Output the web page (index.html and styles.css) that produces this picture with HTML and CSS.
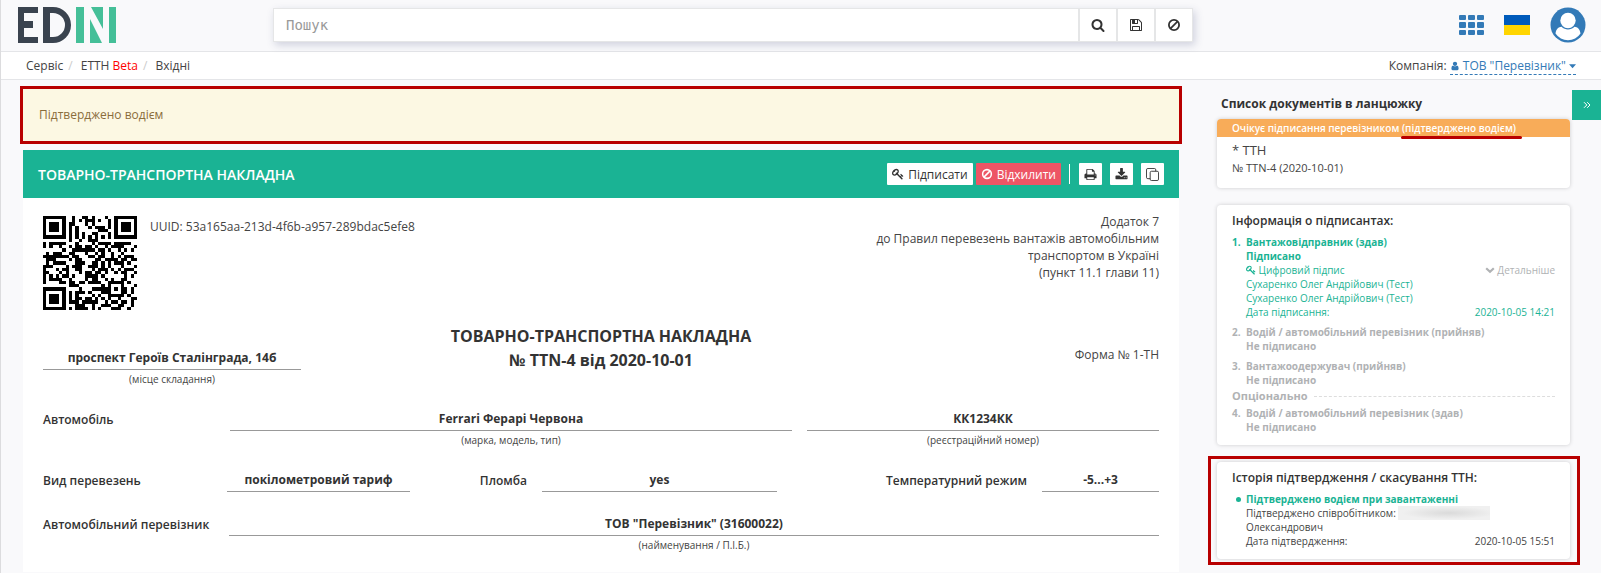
FILE: index.html
```html
<!DOCTYPE html>
<html lang="uk">
<head>
<meta charset="utf-8">
<title>EDIN — Товарно-транспортна накладна</title>
<link rel="stylesheet" href="styles.css">
</head>
<body>
<svg class="sprite" aria-hidden="true">
  <symbol id="i-search" viewBox="0 0 1792 1792"><path d="M1216 832q0-185-131.5-316.5t-316.5-131.5-316.5 131.5-131.5 316.5 131.5 316.5 316.5 131.5 316.5-131.5 131.5-316.5zm512 832q0 52-38 90t-90 38q-54 0-90-38l-343-342q-179 124-399 124-143 0-273.5-55.5t-225-150-150-225-55.5-273.5 55.5-273.5 150-225 225-150 273.5-55.5 273.5 55.5 225 150 150 225 55.5 273.5q0 220-124 399l343 343q37 37 37 90z"/></symbol>
  <symbol id="i-save" viewBox="0 0 1792 1792"><path d="M512 1536h768v-384h-768v384zm896 0h128v-896q0-14-10-38.5t-20-34.5l-281-281q-10-10-34-20t-39-10v416q0 40-28 68t-68 28h-576q-40 0-68-28t-28-68v-416h-128v1280h128v-416q0-40 28-68t68-28h832q40 0 68 28t28 68v416zm-384-928v-320q0-13-9.5-22.5t-22.5-9.5h-192q-13 0-22.5 9.5t-9.5 22.5v320q0 13 9.5 22.5t22.5 9.5h192q13 0 22.5-9.5t9.5-22.5zm640 32v928q0 40-28 68t-68 28h-1344q-40 0-68-28t-28-68v-1344q0-40 28-68t68-28h928q40 0 88 20t76 48l280 280q28 28 48 76t20 88z"/></symbol>
  <symbol id="i-ban" viewBox="0 0 14 14"><g fill="none" stroke="currentColor" stroke-width="1.8"><circle cx="7" cy="7" r="5.1"/><path d="M3.4 10.6l7.2-7.2"/></g></symbol>
  <symbol id="i-user" viewBox="0 0 1792 1792"><path d="M1536 1399q0 109-62.5 187t-150.5 78h-854q-88 0-150.5-78t-62.5-187q0-85 8.5-160.5t31.5-152 58.5-131 94-89 134.5-34.5q131 128 313 128t313-128q76 0 134.5 34.5t94 89 58.5 131 31.5 152 8.5 160.5zm-256-887q0 159-112.5 271.5t-271.5 112.5-271.5-112.5-112.5-271.5 112.5-271.5 271.5-112.5 271.5 112.5 112.5 271.5z"/></symbol>
  <symbol id="i-key" viewBox="0 0 1792 1792"><path d="M832 512q0-80-56-136t-136-56-136 56-56 136q0 42 19 83-41-19-83-19-80 0-136 56t-56 136 56 136 136 56 136-56 56-136q0-42-19-83 41 19 83 19 80 0 136-56t56-136zm851 704q0 17-49 66t-66 49q-9 0-28.5-16t-36.5-33-38.5-40-24.5-26l-96 96 220 220q28 28 28 68 0 42-39 81t-81 39q-40 0-68-28l-671-671q-176 131-365 131-163 0-265.5-102.5t-102.5-265.5q0-160 95-313t248-248 313-95q163 0 265.5 102.5t102.5 265.5q0 189-131 365l355 355 96-96q-3-3-26-24.5t-40-38.5-33-36.5-16-28.5q0-17 49-66t66-49q13 0 23 10 6 6 46 44.5t82 79.5 86.5 86 73 78 28.5 41z"/></symbol>
  <symbol id="i-print" viewBox="0 0 1792 1792"><path d="M448 1536h896v-256h-896v256zm0-640h896v-384h-160q-40 0-68-28t-28-68v-160h-640v640zm1152 64q0-26-19-45t-45-19-45 19-19 45 19 45 45 19 45-19 19-45zm128 0v416q0 13-9.5 22.5t-22.5 9.5h-224v160q0 40-28 68t-68 28h-960q-40 0-68-28t-28-68v-160h-224q-13 0-22.5-9.5t-9.5-22.5v-416q0-79 56.5-135.5t135.5-56.5h64v-544q0-40 28-68t68-28h672q40 0 88 20t76 48l152 152q28 28 48 76t20 88v256h64q79 0 135.5 56.5t56.5 135.5z"/></symbol>
  <symbol id="i-download" viewBox="0 0 1792 1792"><path d="M1344 1344q0-26-19-45t-45-19-45 19-19 45 19 45 45 19 45-19 19-45zm256 0q0-26-19-45t-45-19-45 19-19 45 19 45 45 19 45-19 19-45zm128-224v320q0 40-28 68t-68 28h-1472q-40 0-68-28t-28-68v-320q0-40 28-68t68-28h465l135 136q58 56 136 56t136-56l136-136h464q40 0 68 28t28 68zm-325-569q17 41-14 70l-448 448q-18 19-45 19t-45-19l-448-448q-31-29-14-70 17-39 59-39h256v-448q0-26 19-45t45-19h256q26 0 45 19t19 45v448h256q42 0 59 39z"/></symbol>
  <symbol id="i-copy" viewBox="0 0 14 14"><g fill="none" stroke="currentColor"><rect x="4.5" y="3.5" width="9" height="10" rx="1.5"/><path d="M10.5 3.5V2A1.5 1.5 0 0 0 9 .5H2A1.5 1.5 0 0 0 .5 2v8A1.5 1.5 0 0 0 2 11.500h2.500"/></g></symbol>
  <symbol id="i-down" viewBox="0 0 10 10"><path d="M1.200 3.200L5 6.800l3.800-3.600" fill="none" stroke="currentColor" stroke-width="2.200"/></symbol>
  <symbol id="i-caret" viewBox="0 0 8 8"><path d="M0 2h8L4 6.500z"/></symbol>
  <symbol id="i-angles" viewBox="0 0 8 8"><path d="M1 1.200L3.800 4 1 6.800M4.200 1.200L7 4 4.200 6.800" fill="none" stroke="currentColor"/></symbol>
</svg>

<header class="topbar">
  <a class="logo" href="#" aria-label="EDIN">
    <svg viewBox="0 0 98 36" width="98" height="36">
      <path fill="#3a434f" d="M0 0h20v6H6v8h9v7H6v9h14v6H0zM25 0h10a18 18 0 0 1 0 36H25zM32 6v24h3a12 12 0 0 0 0-24z"/>
      <path fill="#45bf98" d="M58 0h8v36h-8zM91 0h7v36h-7zM73 0h12v22zM72 12l12 24H72z"/>
    </svg>
  </a>
  <form class="search">
    <input class="search-input" type="text" placeholder="Пошук" aria-label="Пошук">
    <button class="search-btn" type="button" aria-label="Знайти"><svg class="icon"><use href="#i-search"/></svg></button>
    <button class="search-btn" type="button" aria-label="Зберегти"><svg class="icon"><use href="#i-save"/></svg></button>
    <button class="search-btn" type="button" aria-label="Очистити"><svg class="icon"><use href="#i-ban"/></svg></button>
  </form>
  <nav class="tools">
    <button class="tool" type="button" aria-label="Сервіси">
      <svg viewBox="0 0 25 21" width="25" height="21">
        <rect y="1" width="7" height="5" rx="1"/><rect x="9" y="1" width="7" height="5" rx="1"/><rect x="18" y="1" width="7" height="5" rx="1"/>
        <rect y="8" width="7" height="6" rx="1"/><rect x="9" y="8" width="7" height="6" rx="1"/><rect x="18" y="8" width="7" height="6" rx="1"/>
        <rect y="16" width="7" height="5" rx="1"/><rect x="9" y="16" width="7" height="5" rx="1"/><rect x="18" y="16" width="7" height="5" rx="1"/>
      </svg>
    </button>
    <button class="tool" type="button" aria-label="Українська"><svg viewBox="0 0 26 20" width="26" height="20"><path fill="#005bbb" d="M0 0h26v10H0z"/><path fill="#ffd500" d="M0 10h26v10H0z"/></svg></button>
    <button class="tool" type="button" aria-label="Профіль">
      <svg viewBox="0 0 36 36" width="36" height="36">
        <circle cx="18" cy="18" r="17.500"/>
        <path fill="#fff" d="M5.500 26.500c.6-4.500 3-6.500 6-6.700 3.700 3.700 9.300 3.700 13 0 3 .2 5.400 2.200 6 6.700a15 15 0 0 1-25 0z"/>
        <circle cx="18" cy="13.500" r="7.700" fill="#fff"/>
      </svg>
    </button>
  </nav>
</header>

<div class="crumbs">
  <nav class="crumb-list">
    <a href="#">Сервіс</a><span class="slash">/</span><a href="#">ЕТТН <span class="beta">Beta</span></a><span class="slash">/</span><a href="#">Вхідні</a>
  </nav>
  <div class="company">Компанія: <a class="company-link" href="#"><svg class="icon-sm"><use href="#i-user"/></svg> ТОВ "Перевізник" <svg class="icon-caret"><use href="#i-caret"/></svg></a></div>
</div>

<div class="layout">
  <main class="main">
    <div class="alert">Підтверджено водієм</div>
    <section class="doc">
      <div class="doc-head">
        <h1 class="doc-title">ТОВАРНО-ТРАНСПОРТНА НАКЛАДНА</h1>
        <div class="actions">
          <button class="btn" type="button"><svg class="icon-btn"><use href="#i-key"/></svg> Підписати</button>
          <button class="btn btn-danger" type="button"><svg class="icon-btn"><use href="#i-ban"/></svg> Відхилити</button>
          <span class="divider"></span>
          <button class="btn btn-icon" type="button" aria-label="Друк"><svg class="icon-md"><use href="#i-print"/></svg></button>
          <button class="btn btn-icon" type="button" aria-label="Завантажити"><svg class="icon-md"><use href="#i-download"/></svg></button>
          <button class="btn btn-icon" type="button" aria-label="Копіювати"><svg class="icon-md"><use href="#i-copy"/></svg></button>
        </div>
      </div>
      <div class="doc-body">
        <div class="doc-top">
          <svg class="qr" id="qr" viewBox="0 0 29 29" data-text="53a165aa-213d-4f6b-a957-289bdac5efe8" role="img" aria-label="QR-код"></svg>
          <div class="uuid">UUID: 53a165aa-213d-4f6b-a957-289bdac5efe8</div>
          <div class="annex">Додаток 7<br>до Правил перевезень вантажів автомобільним<br>транспортом в Україні<br>(пункт 11.1 глави 11)</div>
        </div>
        <div class="row row-title">
          <div class="place">
            <div class="value">проспект Героїв Сталінграда, 14б</div>
            <div class="hint">(місце складання)</div>
          </div>
          <h2 class="title">ТОВАРНО-ТРАНСПОРТНА НАКЛАДНА<br>№ TTN-4 від 2020-10-01</h2>
          <div class="form-no">Форма № 1-ТН</div>
        </div>
        <div class="row row-car">
          <div class="label">Автомобіль</div>
          <div><div class="value">Ferrari Ферарі Червона</div><div class="hint">(марка, модель, тип)</div></div>
          <div><div class="value">КК1234КК</div><div class="hint">(реєстраційний номер)</div></div>
        </div>
        <div class="row row-kind">
          <div class="label">Вид перевезень</div>
          <div class="value">покілометровий тариф</div>
          <div class="label label-end">Пломба</div>
          <div class="value">yes</div>
          <div class="label label-end">Температурний режим</div>
          <div class="value">-5...+3</div>
        </div>
        <div class="row row-carrier">
          <div class="label">Автомобільний перевізник</div>
          <div><div class="value">ТОВ "Перевізник" (31600022)</div><div class="hint">(найменування / П.І.Б.)</div></div>
        </div>
      </div>
    </section>
  </main>

  <aside class="side">
    <button class="collapse" type="button" aria-label="Згорнути"><svg class="icon-xs"><use href="#i-angles"/></svg></button>
    <h2 class="side-title">Список документів в ланцюжку</h2>
    <section class="card card-doc">
      <div class="status">Очікує підписання перевізником <span class="marked">(підтверджено водієм)</span></div>
      <div class="card-doc-body">
        <div class="doc-type">* ТТН</div>
        <div class="doc-num">№ TTN-4 (2020-10-01)</div>
      </div>
    </section>
    <section class="card card-pad">
      <h3 class="card-title">Інформація о підписантах:</h3>
      <div class="signer signed">
        <span class="num">1.</span>
        <div>
          <strong>Вантажовідправник (здав)<br>Підписано</strong>
          <div class="pair"><span><svg class="icon-key"><use href="#i-key"/></svg> Цифровий підпис</span><a class="more" href="#"><svg class="icon-key"><use href="#i-down"/></svg> Детальніше</a></div>
          <div>Сухаренко Олег Андрійович (Тест)</div>
          <div>Сухаренко Олег Андрійович (Тест)</div>
          <div class="pair"><span>Дата підписання:</span><span>2020-10-05 14:21</span></div>
        </div>
      </div>
      <div class="signer"><span class="num">2.</span><strong>Водій / автомобільний перевізник (прийняв)<br>Не підписано</strong></div>
      <div class="signer"><span class="num">3.</span><strong>Вантажоодержувач (прийняв)<br>Не підписано</strong></div>
      <div class="optional">Опціонально</div>
      <div class="signer"><span class="num">4.</span><strong>Водій / автомобільний перевізник (здав)<br>Не підписано</strong></div>
    </section>
    <section class="card card-pad card-history">
      <h3 class="card-title">Історія підтвердження / скасування ТТН:</h3>
      <div class="event">
        <strong class="event-name">Підтверджено водієм при завантаженні</strong>
        <div>Підтверджено співробітником: <span class="redacted"></span><br>Олександрович</div>
        <div class="pair"><span>Дата підтвердження:</span><span>2020-10-05 15:51</span></div>
      </div>
    </section>
  </aside>
</div>
<script src="qr.js"></script>
</body>
</html>
```
FILE: styles.css
```css
* { box-sizing: border-box; }
body {
  margin: 0;
  min-height: 100vh;
  background: #f9f9fb;
  border-left: 1px solid #dcdcde;
  color: #444;
  font: 12px/17px "Open Sans", "Noto Sans", sans-serif;
  overflow: hidden;
}
h1, h2, h3 { margin: 0; font-size: 12px; font-weight: 600; color: #333; }
a { color: inherit; text-decoration: none; }
button { font: inherit; color: inherit; cursor: pointer; }
svg { fill: currentColor; }
.sprite { display: none; }
.icon, .icon-sm, .icon-md, .icon-btn, .icon-key, .icon-caret, .icon-xs { flex: none; }
.icon { width: 14px; height: 14px; }
.icon-md { width: 13px; height: 13px; }
.icon-btn { width: 12px; height: 12px; }
.icon-sm { width: 10px; height: 12px; vertical-align: -2px; transform-origin: center; }
.icon-key { width: 10px; height: 10px; vertical-align: -1px; }
.icon-caret { width: 7px; height: 8px; }
.icon-xs { width: 8px; height: 8px; }

.topbar {
  display: flex;
  align-items: center;
  height: 52px;
  padding: 0 15px 2px 17px;
  border-bottom: 1px solid #e4e5e8;
}
.logo { display: flex; margin-right: 157px; }
.search {
  display: flex;
  flex: 0 1 920px;
  height: 34px;
  border: 1px solid #e5e6e7;
  background: #fff;
  box-shadow: 2px 3px 8px rgba(60, 70, 120, .22);
}
.search-input {
  flex: 1;
  min-width: 0;
  padding: 0 12px;
  border: 0;
  background: none;
  font: 14px "DejaVu Sans Mono", monospace;
}
.search-input::placeholder { color: #999; }
.search-btn {
  display: flex;
  align-items: center;
  justify-content: center;
  width: 38px;
  border: 0;
  border-left: 2px solid #e5e6e7;
  background: none;
  color: #333;
}
.tools { display: flex; align-items: center; gap: 20px; margin-left: auto; color: #337ab7; }
.tool { display: flex; padding: 0; border: 0; background: none; }

.crumbs {
  display: flex;
  justify-content: space-between;
  height: 28px;
  padding: 5px 25px 0;
  background: #fff;
  border-bottom: 1px solid #e4e5e8;
}
.slash { margin: 0 8px 0 5px; color: #ccc; }
.beta { color: #f00; }
.company-link { display: inline-block; color: #337ab7; border-bottom: 1px dashed #337ab7; }

.layout {
  display: grid;
  grid-template-columns: minmax(0, 1156fr) minmax(0, 353fr);
  gap: 38px;
  padding: 9px 31px 0 22px;
}
.alert {
  margin-bottom: 9px;
  padding: 17px 16px 18px;
  background: #fcf8e3;
  color: #8a6d3b;
  outline: 3px solid #b80000;
}
.doc { background: #fff; }
.doc-head {
  display: flex;
  align-items: center;
  justify-content: space-between;
  height: 48px;
  padding: 0 15px;
  background: #1ab394;
}
.doc-title { font-size: 14px; font-weight: 600; color: #fff; }
.actions { display: flex; align-items: center; }
.btn {
  display: flex;
  align-items: center;
  gap: 4px;
  height: 22px;
  margin-left: 3px;
  padding: 0 5px;
  border: 0;
  border-radius: 1px;
  background: #fff;
  color: #333;
}
.btn-danger { background: #ed5565; color: #fff; }
.btn-icon { width: 23px; margin-left: 8px; }
.divider { width: 1px; height: 20px; margin: 0 1px 0 8px; background: #fff; }
.doc-body { padding: 18px 20px; }
.doc-top { display: flex; }
.qr { width: 94px; height: 94px; color: #000; }
.uuid { padding: 2px 13px; }
.annex { margin: -3px 0 0 auto; text-align: right; }
.row { display: grid; color: #333; }
.value {
  height: 22px;
  border-bottom: 1px solid #999;
  font-weight: 700;
  line-height: 20px;
  text-align: center;
  color: #333;
}
.hint { font-size: 10px; text-align: center; color: #444; padding-top: 1px; }
.label { font-weight: 600; line-height: 22px; }
.label-end { padding-right: 15px; text-align: right; }
.row-title { grid-template-columns: 1fr 2fr 1fr; margin-top: 14px; }
.place { width: 258px; padding-top: 24px; }
.title { font-size: 16px; line-height: 24px; font-weight: 700; text-align: center; }
.form-no { padding-top: 22px; text-align: right; color: #444; }
.row-car { grid-template-columns: 172px 562fr 352fr; gap: 15px; margin-top: 21px; }
.row-kind { grid-template-columns: 184fr 183fr 132fr 235fr 265fr 117fr; margin-top: 21px; }
.row-carrier { grid-template-columns: 186fr 930fr; margin-top: 22px; }

.side { position: relative; padding-top: 6px; font-size: 10px; line-height: 14px; }
.side-title { padding-left: 4px; line-height: 18px; font-weight: 700; }
.collapse {
  position: absolute;
  top: 1px;
  right: -31px;
  display: flex;
  align-items: center;
  justify-content: center;
  width: 29px;
  height: 30px;
  border: 0;
  background: #1ab394;
  color: #fff;
}
.card {
  position: relative;
  margin-bottom: 17px;
  border-radius: 4px;
  background: #fff;
  box-shadow: 0 0 4px rgba(0, 0, 0, .18);
}
.card-doc { margin-top: 6px; }
.status {
  padding: 2px 15px;
  border-radius: 4px 4px 0 0;
  background: #f8ac59;
  color: #fff;
  font-weight: 600;
}
.marked { position: relative; }
.marked::after {
  content: "";
  position: absolute;
  left: -1px;
  right: -6px;
  top: 15px;
  height: 3px;
  border-radius: 2px;
  background: #b80000;
}
.card-doc-body { padding: 4px 15px 11px; }
.doc-type { font-size: 13px; line-height: 18px; }
.doc-num { font-size: 11px; line-height: 18px; }
.card-pad { padding: 7px 15px 11px; }
.card-title { line-height: 18px; margin-bottom: 5px; }
.signer { display: grid; grid-template-columns: 14px 1fr; color: #b0b2b4; }
.signer + .signer { margin-top: 6px; }
.signer strong, .num { font-weight: 700; }
.signer.signed { color: #1ab394; }
.pair { display: flex; justify-content: space-between; }
.more { color: #b0b2b4; }
.optional {
  display: flex;
  align-items: center;
  gap: 6px;
  margin: 2px 0 3px;
  font-size: 11px;
  font-weight: 700;
  color: #b0b2b4;
}
.optional::after { content: ""; flex: 1; border-top: 1px dashed #ddd; }
.card-history::after {
  content: "";
  position: absolute;
  inset: -6px -10px -6px -9px;
  border: 3px solid #b80000;
  pointer-events: none;
}
.event { position: relative; padding-left: 14px; color: #444; }
.event::before {
  content: "";
  position: absolute;
  left: 4px;
  top: 5px;
  width: 5px;
  height: 5px;
  border-radius: 50%;
  background: #1ab394;
}
.event-name { color: #1ab394; }
.redacted {
  display: inline-block;
  width: 92px;
  height: 14px;
  background: radial-gradient(ellipse at 55% 50%, #dadada, #f0f0f0 65%);
  vertical-align: top;
}
```
FILE: qr.js
```js
// Byte-mode QR encoder: version 3 (29x29), error correction level M, mask 2.
(function () {
  const SIZE = 29, DATA = 44, EC = 26;

  function codewords(text) {
    const bytes = new TextEncoder().encode(text);
    let bits = '0100' + bytes.length.toString(2).padStart(8, '0');
    bytes.forEach(b => { bits += b.toString(2).padStart(8, '0'); });
    bits += '0000';
    while (bits.length % 8) bits += '0';
    const out = bits.match(/.{8}/g).map(s => parseInt(s, 2));
    for (let pad = 0xEC; out.length < DATA; pad ^= 0xEC ^ 0x11) out.push(pad);
    return out;
  }

  function mul(a, b) {
    let r = 0;
    for (; b; b >>= 1) {
      if (b & 1) r ^= a;
      a = a & 128 ? (a << 1) ^ 0x11D : a << 1;
    }
    return r;
  }

  function errorWords(data) {
    const gen = new Array(EC).fill(0);
    gen[EC - 1] = 1;
    let root = 1;
    for (let i = 0; i < EC; i++) {
      for (let j = 0; j < EC; j++) {
        gen[j] = mul(gen[j], root) ^ (j + 1 < EC ? gen[j + 1] : 0);
      }
      root = mul(root, 2);
    }
    const rem = new Array(EC).fill(0);
    data.forEach(b => {
      const f = b ^ rem.shift();
      rem.push(0);
      gen.forEach((g, i) => { rem[i] ^= mul(g, f); });
    });
    return rem;
  }

  function matrix(text) {
    const m = Array.from({ length: SIZE }, () => new Array(SIZE).fill(null));
    const square = (cy, cx, r, dark) => {
      for (let y = cy - r; y <= cy + r; y++) {
        for (let x = cx - r; x <= cx + r; x++) {
          if (m[y] && x >= 0 && x < SIZE) {
            m[y][x] = dark(Math.max(Math.abs(y - cy), Math.abs(x - cx)));
          }
        }
      }
    };
    for (let i = 0; i < SIZE; i++) m[6][i] = m[i][6] = i % 2 === 0;
    [[3, 3], [3, SIZE - 4], [SIZE - 4, 3]].forEach(p => square(p[0], p[1], 4, d => d !== 2 && d !== 4));
    square(22, 22, 2, d => d !== 1);

    const format = [...'101111001111100'].map(c => c === '1');
    const first = [[8, 0], [8, 1], [8, 2], [8, 3], [8, 4], [8, 5], [8, 7], [8, 8], [7, 8], [5, 8], [4, 8], [3, 8], [2, 8], [1, 8], [0, 8]];
    format.forEach((bit, i) => {
      m[first[i][0]][first[i][1]] = bit;
      if (i < 7) m[SIZE - 1 - i][8] = bit;
      else m[8][SIZE - 15 + i] = bit;
    });
    m[SIZE - 8][8] = true;

    const data = codewords(text);
    const bits = data.concat(errorWords(data)).map(b => b.toString(2).padStart(8, '0')).join('');
    let n = 0, up = true;
    for (let right = SIZE - 1; right > 0; right -= 2) {
      if (right === 6) right = 5;
      for (let k = 0; k < SIZE; k++) {
        const y = up ? SIZE - 1 - k : k;
        for (const x of [right, right - 1]) {
          if (m[y][x] === null) m[y][x] = (bits[n++] === '1') !== (x % 3 === 0);
        }
      }
      up = !up;
    }
    return m;
  }

  const svg = document.getElementById('qr');
  let d = '';
  matrix(svg.dataset.text).forEach((row, y) => row.forEach((on, x) => {
    if (on) d += `M${x} ${y}h1v1h-1z`;
  }));
  const path = document.createElementNS('http://www.w3.org/2000/svg', 'path');
  path.setAttribute('d', d);
  path.setAttribute('shape-rendering', 'crispEdges');
  svg.appendChild(path);
})();
```
